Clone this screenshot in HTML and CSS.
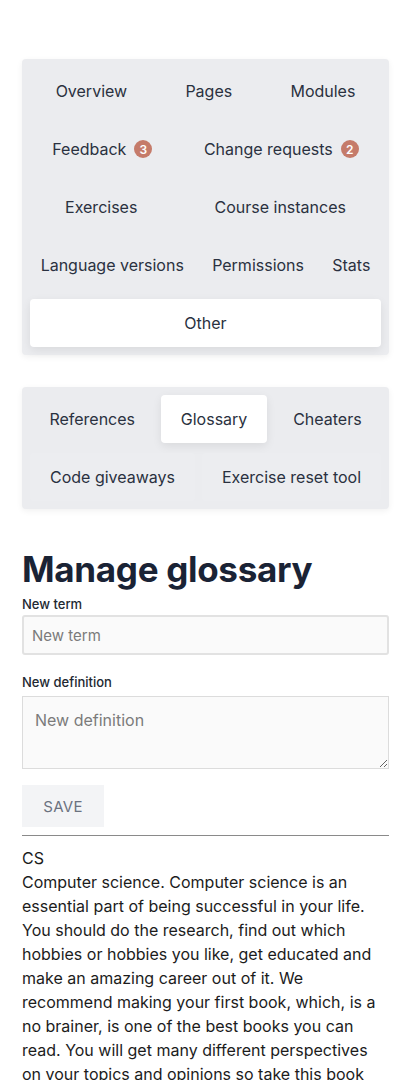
FILE: index.html
```html
<!DOCTYPE html>
<html lang="en">
<head>
<meta charset="utf-8">
<link rel="stylesheet" href="styles.css">
</head>
<body>
<div class="page">
  <nav class="tabs tabs-main">
    <a class="tab">Overview</a>
    <a class="tab">Pages</a>
    <a class="tab">Modules</a>
    <a class="tab">Feedback <span class="badge">3</span></a>
    <a class="tab">Change requests <span class="badge">2</span></a>
    <a class="tab">Exercises</a>
    <a class="tab">Course instances</a>
    <a class="tab">Language versions</a>
    <a class="tab">Permissions</a>
    <a class="tab">Stats</a>
    <a class="tab active">Other</a>
  </nav>

  <nav class="tabs tabs-sub">
    <a class="tab">References</a>
    <a class="tab active">Glossary</a>
    <a class="tab">Cheaters</a>
    <a class="tab ghost">Code giveaways</a>
    <a class="tab ghost">Exercise reset tool</a>
  </nav>

  <h1 class="title">Manage glossary</h1>

  <form class="form">
    <label class="field">
      <span class="label">New term</span>
      <input class="input" type="text" placeholder="New term">
    </label>
    <label class="field field-def">
      <span class="label">New definition</span>
      <textarea class="textarea" placeholder="New definition"></textarea>
    </label>
    <button class="save" type="button">Save</button>
  </form>

  <hr class="rule">

  <div class="entry">
    <div class="term">CS</div>
    <div class="definition">Computer science. Computer science is an essential part of being successful in your life. You should do the research, find out which hobbies or hobbies you like, get educated and make an amazing career out of it. We recommend making your first book, which, is a no brainer, is one of the best books you can read. You will get many different perspectives on your topics and opinions so take this book with you.</div>
  </div>
</div>
</body>
</html>
```

FILE: styles.css
```css
* { box-sizing: border-box; }

html, body {
  margin: 0;
  padding: 0;
  background: #ffffff;
}

body {
  font-family: Inter, "Noto Sans", sans-serif;
  color: #1f2430;
}

.page {
  padding: 59px 22px 0 22px;
}

.tabs {
  display: flex;
  flex-wrap: wrap;
  gap: 10px 7px;
  padding: 8px;
  background: #ebecef;
  border-radius: 4px;
  box-shadow: 0 2px 6px rgba(0, 0, 0, 0.06);
}

.tabs-sub {
  margin-top: 32px;
}

.tab {
  flex: 1 1 auto;
  height: 48px;
  padding: 0 10px;
  display: flex;
  align-items: center;
  justify-content: center;
  gap: 8px;
  font-size: 16px;
  color: #2a3140;
  border-radius: 4px;
  white-space: nowrap;
}

.tab.active {
  background: #ffffff;
  box-shadow: 0 3px 10px rgba(0, 0, 0, 0.08);
}

.tab.ghost {
  background: #ecedf0;
}

.badge {
  display: inline-flex;
  align-items: center;
  justify-content: center;
  width: 18px;
  height: 18px;
  border-radius: 50%;
  background: #c57b6a;
  color: #ffffff;
  font-size: 12px;
  font-weight: 600;
}

.title {
  margin: 38px 0 5px 0;
  font-family: Inter, "Noto Sans", sans-serif;
  font-weight: 700;
  font-size: 35px;
  line-height: 44px;
  color: #1a2335;
  letter-spacing: -0.3px;
}

.form {
  display: flex;
  flex-direction: column;
  align-items: flex-start;
}

.field {
  display: flex;
  flex-direction: column;
  width: 100%;
}

.label {
  font-size: 13px;
  font-weight: 500;
  line-height: 16px;
  color: #222831;
  margin-bottom: 3px;
}

.input {
  width: 100%;
  height: 40px;
  border: 2px solid #e2e2e2;
  border-radius: 3px;
  background: #fafafa;
  padding: 0 8px;
  font-family: Inter, "Noto Sans", sans-serif;
  font-size: 15px;
  color: #333;
}

.input::placeholder,
.textarea::placeholder {
  color: #7b7b7b;
}

.field-def {
  margin-top: 19px;
}

.field-def .label {
  margin-bottom: 6px;
}

.textarea {
  width: 100%;
  height: 73px;
  border: 1px solid #dcdcdc;
  border-radius: 0;
  background: #fafafa;
  padding: 13px 12px;
  font-family: Inter, "Noto Sans", sans-serif;
  font-size: 16px;
  line-height: 20px;
  color: #333;
  resize: vertical;
}

.save {
  margin-top: 16px;
  width: 82px;
  height: 42px;
  border: none;
  border-radius: 0;
  background: #f3f4f6;
  color: #6b7280;
  font-family: Inter, "Noto Sans", sans-serif;
  font-size: 15px;
  text-transform: uppercase;
  letter-spacing: 0.3px;
}

.rule {
  margin: 8px 0 0 0;
  border: none;
  border-top: 1px solid #8a8a8a;
  height: 0;
}

.entry {
  padding-top: 10px;
  font-size: 16px;
  line-height: 24px;
  color: #1c1c1c;
}
```
